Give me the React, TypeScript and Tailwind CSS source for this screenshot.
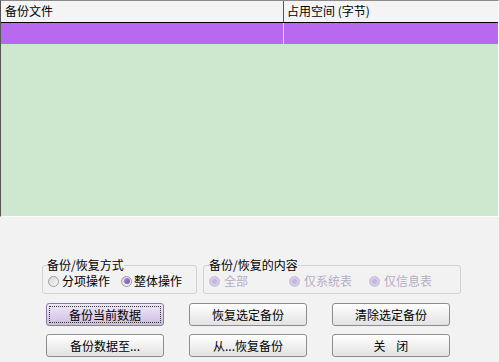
import React from "react";

// 单选按钮（仅绘制外观）
const Radio = ({ checked = false, disabled = false }: { checked?: boolean; disabled?: boolean }) => {
  if (disabled) {
    return (
      <span className="w-[11px] h-[11px] rounded-full border border-[#c9c0dc] bg-[#d6cbe8] flex items-center justify-center">
        <span className="w-[5px] h-[5px] rounded-full bg-[#c4b6dc]" />
      </span>
    );
  }
  return (
    <span className="w-[11px] h-[11px] rounded-full border border-[#9c9c9c] bg-gradient-to-br from-[#d8d8d8] to-[#f8f8f8] flex items-center justify-center">
      {checked && <span className="w-[6px] h-[6px] rounded-full bg-gradient-to-br from-[#b08ad8] to-[#7a4fae]" />}
    </span>
  );
};

const Btn = ({ text, active = false }: { text: string; active?: boolean }) => (
  <button
    className={
      active
        ? "h-[23px] w-[118px] rounded-[3px] border border-[#8a7aa6] bg-gradient-to-b from-[#efe9f8] to-[#cbbde2] p-[2px]"
        : "h-[23px] w-[118px] rounded-[3px] border border-[#8e8e8e] bg-gradient-to-b from-[#ffffff] to-[#e2e2e2] p-[2px]"
    }
  >
    <span
      className={
        active
          ? "flex h-full w-full items-center justify-center border border-dotted border-[#333] whitespace-pre"
          : "flex h-full w-full items-center justify-center border border-transparent whitespace-pre"
      }
    >
      {text}
    </span>
  </button>
);

export default function App() {
  return (
    <div className="w-[499px] h-[362px] bg-[#f3f2f2] text-[12px] text-black font-['Noto_Sans_CJK_SC',sans-serif] flex flex-col overflow-hidden">
      {/* 备份列表 */}
      <div className="h-[217px] flex flex-col border-t border-l border-t-[#8a8a8a] border-l-[#555] border-r border-b border-r-white border-b-white">
        <div className="h-[22px] flex bg-[#f4f4f4] border-b border-black leading-[20px]">
          <div className="w-[283px] border-r border-[#555] pl-[4px]">备份文件</div>
          <div className="flex-1 pl-[3px]">占用空间 (字节)</div>
        </div>
        <div className="h-[21px] flex bg-[#b968f0]">
          <div className="w-[283px] border-r border-[#e3c9f6]" />
          <div className="flex-1" />
        </div>
        <div className="flex-1 bg-[#cde8cf]" />
      </div>

      {/* 选项 */}
      <div className="mt-[41px] flex pl-[42px] gap-[6px]">
        <fieldset className="w-[155px] h-[36px] border border-[#d2d2d2] rounded-[3px] pl-[4px]">
          <legend className="leading-[14px]">备份/恢复方式</legend>
          <div className="flex items-center h-[18px] pl-[1px]">
            <Radio />
            <span className="ml-[3px]">分项操作</span>
            <span className="ml-[11px]"><Radio checked /></span>
            <span className="ml-[2px]">整体操作</span>
          </div>
        </fieldset>
        <fieldset className="w-[258px] h-[36px] border border-[#d2d2d2] rounded-[3px] pl-[5px] text-[#b5adc4]">
          <legend className="leading-[14px] text-black">备份/恢复的内容</legend>
          <div className="flex items-center h-[18px]">
            <span className="w-[80px] flex items-center gap-[4px]"><Radio disabled /><span>全部</span></span>
            <span className="w-[80px] flex items-center gap-[4px]"><Radio disabled /><span>仅系统表</span></span>
            <span className="flex items-center gap-[4px]"><Radio disabled /><span>仅信息表</span></span>
          </div>
        </fieldset>
      </div>

      {/* 按钮 */}
      <div className="mt-[9px] pl-[46px] grid grid-cols-[118px_118px_118px] gap-x-[25px] gap-y-[8px]">
        <Btn text="备份当前数据" active />
        <Btn text="恢复选定备份" />
        <Btn text="清除选定备份" />
        <Btn text="备份数据至..." />
        <Btn text="从...恢复备份" />
        <Btn text="关    闭" />
      </div>
    </div>
  );
}
